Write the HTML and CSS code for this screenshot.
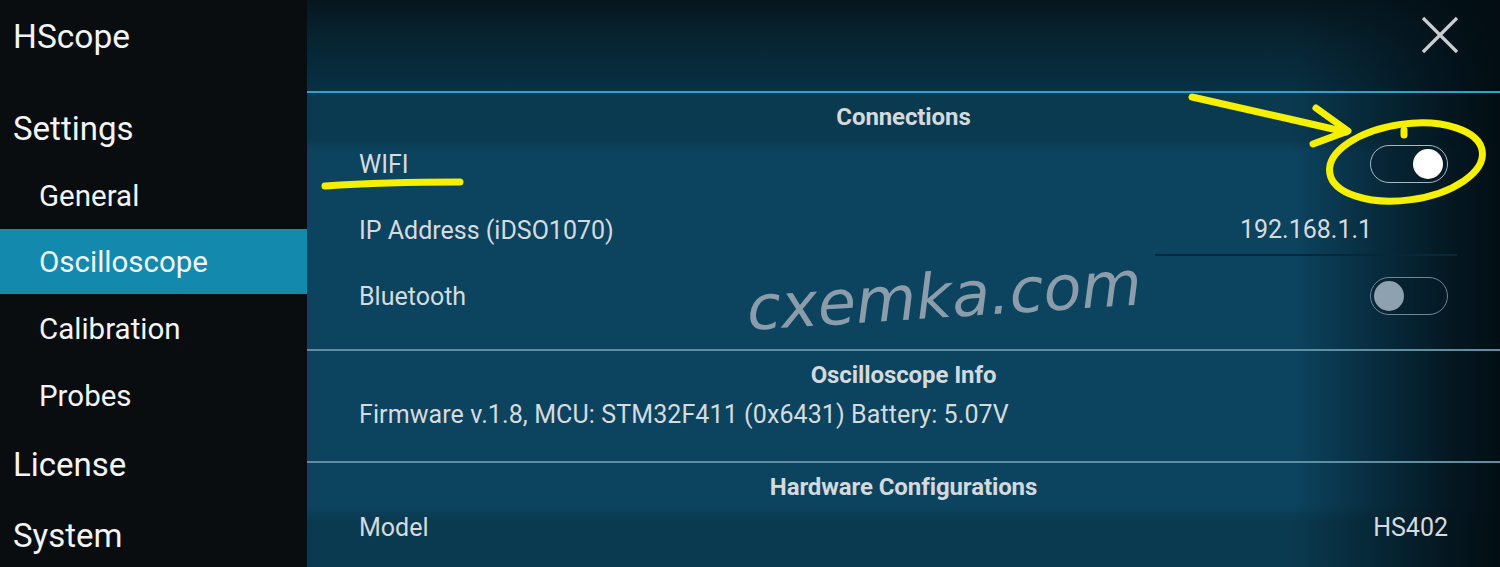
FILE: index.html
```html
<!DOCTYPE html>
<html>
<head>
<meta charset="utf-8">
<link rel="stylesheet" href="styles.css">
</head>
<body>
<div class="app">
  <aside class="sidebar">
    <div class="brand">HScope</div>
    <div class="nav-top nav-settings">Settings</div>
    <div class="nav-sub nav-general">General</div>
    <div class="nav-sub nav-active">Oscilloscope</div>
    <div class="nav-sub nav-cal">Calibration</div>
    <div class="nav-sub nav-probes">Probes</div>
    <div class="nav-top nav-license">License</div>
    <div class="nav-top nav-system">System</div>
  </aside>
  <main class="panel">
    <header class="topbar">
      <button class="close" aria-label="Close">
        <svg width="38" height="38" viewBox="0 0 38 38"><path d="M2 2 L36 36 M36 2 L2 36" stroke="#c9cdd0" stroke-width="3.2" stroke-linecap="butt" fill="none"/></svg>
      </button>
    </header>
    <section class="group group-conn">
      <h2 class="group-title">Connections</h2>
      <div class="row">
        <span class="label">WIFI</span>
        <span class="toggle on"><span class="knob"></span></span>
      </div>
      <div class="row">
        <span class="label">IP Address (iDSO1070)</span>
        <span class="value-box">192.168.1.1</span>
      </div>
      <div class="row">
        <span class="label">Bluetooth</span>
        <span class="toggle"><span class="knob"></span></span>
      </div>
    </section>
    <section class="group group-info">
      <h2 class="group-title">Oscilloscope Info</h2>
      <div class="row row-info">
        <span class="label wide">Firmware v.1.8, MCU: STM32F411 (0x6431) Battery: 5.07V</span>
      </div>
    </section>
    <section class="group group-hw">
      <h2 class="group-title">Hardware Configurations</h2>
      <div class="row row-model">
        <span class="label">Model</span>
        <span class="value">HS402</span>
      </div>
    </section>
    <div class="watermark">cxemka.com</div>
  </main>
</div>
<svg class="annot" width="1500" height="567" viewBox="0 0 1500 567">
  <g fill="none" stroke="#f4f000" stroke-width="7" stroke-linecap="round" stroke-linejoin="round">
    <path d="M325 186 C 370 183, 420 182, 460 182"/>
    <path d="M1192 97 C 1240 108, 1295 120, 1346 132"/>
    <path d="M1316 108 L1348 131 L1313 144"/>
    <ellipse cx="1406" cy="162" rx="77" ry="38" transform="rotate(-8 1406 162)"/>
    <path d="M1404 130 L1404 135"/>
  </g>
</svg>
</body>
</html>
```
FILE: styles.css
```css
* { box-sizing: border-box; }
html, body { margin: 0; padding: 0; }
body {
  width: 1500px;
  height: 567px;
  overflow: hidden;
  position: relative;
  background: #0a0d0f;
  font-family: Roboto, "Liberation Sans", sans-serif;
}
.app {
  display: flex;
  width: 1500px;
  height: 567px;
}
.sidebar {
  width: 307px;
  flex: none;
  background: #0a0d0f;
  color: #f2f4f5;
  display: flex;
  flex-direction: column;
}
.brand, .nav-top, .nav-sub {
  display: flex;
  align-items: center;
}
.brand { height: 74px; margin-bottom: 22px; padding-left: 13px; font-size: 33.5px; }
.nav-top { padding-left: 13px; font-size: 33px; }
.nav-sub { padding-left: 39px; font-size: 29.5px; }
.nav-settings { height: 68px; }
.nav-general { height: 68px; }
.nav-active { height: 66px; background: #1389ad; }
.nav-cal { height: 67px; padding-top: 4px; }
.nav-probes { height: 67px; padding-top: 4px; }
.nav-license { height: 72px; padding-top: 5px; }
.nav-system { height: 70px; padding-top: 6px; }

.panel {
  flex: 1;
  position: relative;
  color: #d6dbde;
  padding: 0 52px;
  background:
    linear-gradient(90deg, rgba(3,18,26,0) 0, rgba(3,18,26,0) 985px, rgba(3,20,28,0.45) 1060px, rgba(2,14,20,0.8) 1140px, rgba(2,12,17,0.97) 1193px),
    linear-gradient(180deg, #06161d 0, #072634 45px, #082f43 89px, #0a3a50 95px, #0a3a50 140px, #0c4460 152px, #0c4460 505px, #0a3a50 520px, #0a3a50 567px);
}
.topbar {
  height: 93px;
  margin: 0 -52px;
  border-bottom: 2px solid #2aa2cb;
  display: flex;
  justify-content: flex-end;
  align-items: flex-start;
  padding: 16px 41px 0 0;
}
.close {
  background: none;
  border: 0;
  padding: 0;
  width: 38px;
  height: 38px;
  display: block;
}
.close svg { display: block; }

.group { display: flex; flex-direction: column; }
.group-title {
  margin: 0;
  padding-top: 10px;
  height: 37px;
  line-height: 28px;
  text-align: center;
  font-size: 24px;
  font-weight: 700;
  color: #d3d9dc;
  letter-spacing: -0.1px;
}
.group-conn { padding-bottom: 21px; }
.group-info, .group-hw {
  margin: 0 -52px;
  padding: 0 52px;
  border-top: 2px solid #5f8da2;
}
.group-info .group-title { padding-top: 10px; height: 37px; }
.row {
  height: 66px;
  display: flex;
  align-items: center;
  justify-content: space-between;
  font-size: 25px;
  padding-top: 2px;
}
.row-info { height: 50px; margin-bottom: 23px; }
.row-model { height: 52px; }
.label { color: #d6dbde; }
.wide { letter-spacing: 0.1px; }
.value { color: #d6dbde; }
.value-box {
  width: 302px;
  margin-right: -9px;
  height: 50px;
  line-height: 48px;
  text-align: center;
  border-bottom: 2px solid #062838;
  align-self: flex-end;
  margin-bottom: 6px;
  color: #d6dbde;
}
.toggle {
  width: 78px;
  height: 38px;
  border-radius: 19px;
  border: 1.5px solid #6c8796;
  background: rgba(6,30,42,0.35);
  display: flex;
  align-items: center;
  padding: 0 3px;
}
.toggle .knob {
  width: 30px;
  height: 30px;
  border-radius: 50%;
  background: #8da1ae;
}
.toggle.on {
  border-color: #a8b8c1;
  justify-content: flex-end;
  padding: 0 4px;
}
.toggle.on .knob { background: #ffffff; }

.watermark {
  position: absolute;
  left: 440px;
  top: 274px;
  font-family: "DejaVu Sans", sans-serif;
  font-style: oblique;
  font-size: 62px;
  line-height: 70px;
  color: #8b9caa;
  transform: rotate(-3.7deg);
  transform-origin: left center;
  white-space: nowrap;
}
.annot {
  position: absolute;
  left: 0;
  top: 0;
  pointer-events: none;
}
```
